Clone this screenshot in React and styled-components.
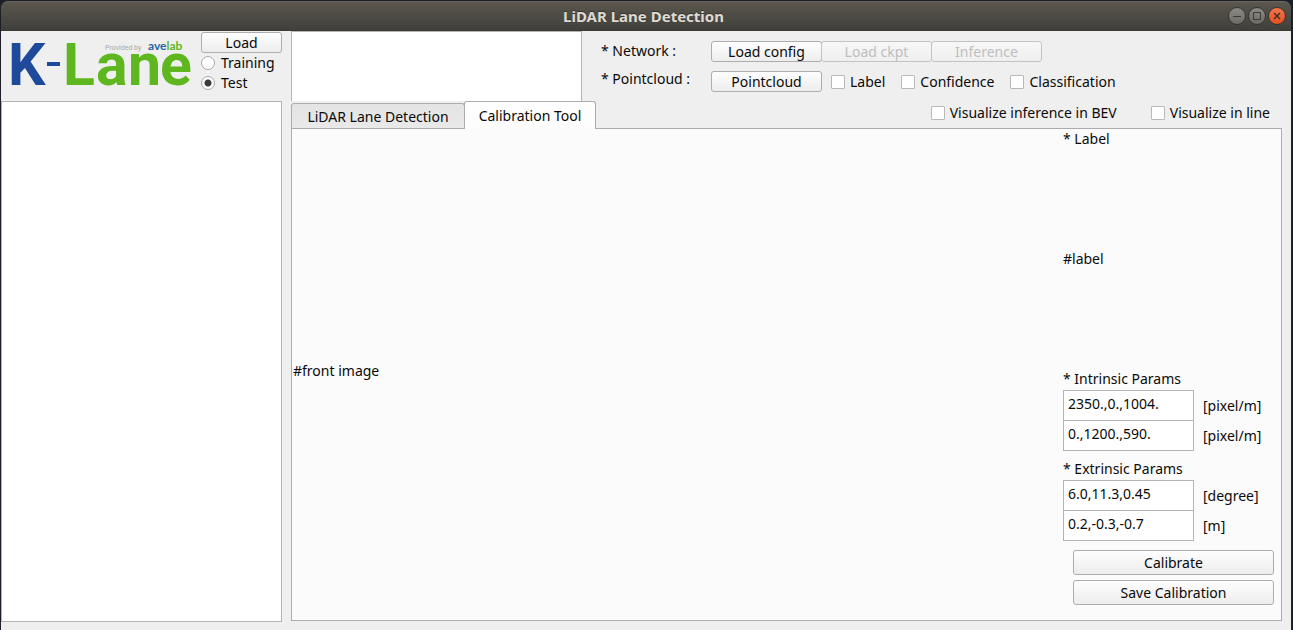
import React, { useState } from "react";
import styled, { createGlobalStyle } from "styled-components";

const GlobalStyle = createGlobalStyle`
  * { box-sizing: border-box; }
  body {
    margin: 0;
    background: #1c1f28;
    color: #0a0a0a;
    font-family: "Noto Sans", "Open Sans", sans-serif;
    font-size: 14px;
    line-height: 20px;
  }
  button, input, textarea { font: inherit; color: inherit; }
`;

const Window = styled.div`
  display: flex;
  flex-direction: column;
  min-height: 100vh;
  border: 1px solid #1c1f28;
  border-right-width: 2px;
  border-bottom: 0;
`;

const TitleBar = styled.header`
  display: grid;
  grid-template-columns: 1fr auto 1fr;
  align-items: center;
  height: 30px;
  padding-right: 5px;
  border-top: 1px solid #6b675e;
  border-bottom: 1px solid #3a3934;
  border-radius: 7px 7px 0 0;
  background: linear-gradient(#5b574e, #403f3a);
`;

const Title = styled.h1`
  grid-column: 2;
  margin: 0;
  font-size: 15px;
  line-height: 20px;
  font-weight: 700;
  color: #dfdbd2;
  text-shadow: 0 -1px 0 #33322e;
`;

const WindowButtons = styled.div`
  display: flex;
  justify-content: flex-end;
  gap: 2px;
`;

const RoundButton = styled.button`
  display: block;
  width: 18px;
  height: 18px;
  padding: 0;
  border: 1px solid #34332f;
  border-radius: 50%;
  background: ${(p) =>
    p.$close ? "linear-gradient(#f5764c, #e4501f)" : "linear-gradient(#8c8a84, #6c6a64)"};
  svg { display: block; }
`;

const Body = styled.main`
  flex: 1;
  display: grid;
  grid-template-columns: 281px 1fr;
  gap: 9px;
  padding: 0 9px 8px 0;
  background: #efefef;
`;

const Column = styled.section`
  display: flex;
  flex-direction: column;
  min-width: 0;
`;

const Brand = styled.div`
  display: flex;
  height: 70px;
`;

const Logo = styled.svg`
  display: block;
  width: 200px;
  height: 70px;
  flex: none;
`;

const Mode = styled.form`
  display: flex;
  flex-direction: column;
  width: 81px;
  padding-top: 1px;
`;

const Button = styled.button`
  height: ${(p) => (p.$tall ? 25 : 21)}px;
  width: ${(p) => (p.$w ? `${p.$w}px` : "auto")};
  padding: 0;
  line-height: 18px;
  border: 1px solid #adadad;
  border-radius: 3px;
  background: linear-gradient(#fefefe, #ededed);
  &:disabled {
    color: #bebebe;
    border-color: #c3c3c3;
    background: linear-gradient(#f7f7f7, #efefef);
  }
`;

const Choice = styled.label`
  display: flex;
  align-items: center;
  gap: ${(p) => (p.$radio ? 6 : 5)}px;
  height: 20px;
  white-space: nowrap;
`;

const Radio = styled.input`
  appearance: none;
  width: 14px;
  height: 14px;
  margin: 0;
  border: 1px solid #a8a8a8;
  border-radius: 50%;
  background: #fff;
  &:checked { background: radial-gradient(circle, #3c3c3c 3px, #fff 4px); }
`;

const Check = styled.input`
  appearance: none;
  width: 14px;
  height: 14px;
  margin: 0;
  border: 1px solid #b9b9b9;
  border-radius: 1px;
  background: #fff;
  &:checked { background: #3c3c3c; box-shadow: inset 0 0 0 3px #fff; }
`;

const FileList = styled.div`
  flex: 1;
  border: 1px solid #b4b4b4;
  background: #fff;
`;

const Top = styled.div`
  display: flex;
  height: 70px;
`;

const Log = styled.textarea`
  display: block;
  width: 291px;
  flex: none;
  resize: none;
  border: 1px solid #b4b4b4;
  border-bottom: 0;
  background: #fff;
  outline: 0;
`;

const Controls = styled.div`
  display: flex;
  padding: 10px 0 0 19px;
`;

const RowNames = styled.div`
  display: flex;
  flex-direction: column;
  gap: 8px;
  width: 110px;
`;

const ControlRows = styled.div`
  display: flex;
  flex-direction: column;
  gap: 9px;
`;

const ControlRow = styled.div`
  display: flex;
  align-items: center;
  height: 21px;
`;

const Joined = styled.div`
  display: flex;
  button + button { margin-left: -1px; }
`;

const Checks = styled.div`
  display: flex;
  gap: ${(p) => (p.$end ? 34 : 16)}px;
  margin-left: ${(p) => (p.$end ? "auto" : "9px")};
  padding: ${(p) => (p.$end ? "0 12px 6px 0" : "1px 0 0")};
`;

const TabRow = styled.div`
  display: flex;
  align-items: flex-end;
  height: 28px;
`;

const Tab = styled.button`
  position: relative;
  width: ${(p) => p.$w}px;
  height: ${(p) => (p.$active ? 28 : 26)}px;
  margin-left: ${(p) => (p.$active ? "-1px" : 0)};
  padding: 0;
  white-space: nowrap;
  border: 1px solid #adadad;
  border-bottom: 0;
  border-radius: 3px 3px 0 0;
  background: ${(p) => (p.$active ? "linear-gradient(#fff, #fcfcfc)" : "linear-gradient(#e4e4e4, #e9e9e9)")};
  z-index: ${(p) => (p.$active ? 1 : 0)};
  box-shadow: ${(p) => (p.$active ? "none" : "inset 0 -1px #adadad")};
`;

const Panel = styled.div`
  flex: 1;
  display: flex;
  margin-top: -1px;
  margin-bottom: 1px;
  border: 1px solid #adadad;
  background: #fbfbfb;
`;

const FrontImage = styled.div`
  flex: 1;
  display: flex;
  align-items: center;
  padding: 0 1px 8px;
`;

const Side = styled.form`
  display: flex;
  flex-direction: column;
  width: 218px;
  padding-right: 7px;
`;

const SideText = styled.div`
  height: 21px;
  margin-bottom: 99px;
`;

const Params = styled.fieldset`
  min-width: 0;
  margin: 0 0 8px;
  padding: 0;
  border: 0;
`;

const Legend = styled.legend`
  height: 21px;
  padding: 0;
`;

const Param = styled.label`
  display: flex;
  align-items: center;
  gap: 9px;
  height: 31px;
  & + & { margin-top: -1px; }
`;

const Field = styled.input`
  width: 131px;
  height: 31px;
  padding: 0 4px 4px;
  border: 1px solid #b4b4b4;
  border-radius: 0;
  background: #fff;
`;

const Actions = styled.div`
  display: flex;
  flex-direction: column;
  gap: 5px;
  padding: 1px 0 0 10px;
`;

function CheckItem({ children }) {
  return (
    <Choice>
      <Check type="checkbox" />
      {children}
    </Choice>
  );
}

function ParamGroup({ title, rows }) {
  return (
    <Params>
      <Legend>{title}</Legend>
      {rows.map(([value, unit]) => (
        <Param key={value}>
          <Field type="text" defaultValue={value} />
          {unit}
        </Param>
      ))}
    </Params>
  );
}

function KLaneLogo() {
  return (
    <Logo viewBox="0 0 200 70" role="img" aria-label="K-Lane, provided by avelab">
      <g fontFamily="Roboto, sans-serif" fontWeight="700" fontSize="59">
        <text x="7" y="54" fill="#1f4a9c">K</text>
        <rect x="46" y="31" width="13" height="4" fill="#1f4a9c" />
        <text x="62 95 127 159" y="54" fill="#5fb71f">Lane</text>
      </g>
      <text x="104" y="19" fontFamily="Roboto, sans-serif" fontSize="7" fill="#a9a9a9">Provided by</text>
      <text x="147" y="19" fontFamily="Lato, sans-serif" fontWeight="700" fontSize="12" fill="#1f67a8">
        ave<tspan fill="#5fb71f">lab</tspan>
      </text>
    </Logo>
  );
}

export default function App() {
  const [mode, setMode] = useState("Test");
  const [tab, setTab] = useState("Calibration Tool");

  return (
    <>
      <GlobalStyle />
      <Window>
        <TitleBar>
          <Title>LiDAR Lane Detection</Title>
          <WindowButtons>
            <RoundButton aria-label="Minimize">
              <svg width="16" height="16" fill="none" stroke="#3a3935"><path d="M4 8.5h8" /></svg>
            </RoundButton>
            <RoundButton aria-label="Maximize">
              <svg width="16" height="16" fill="none" stroke="#3a3935"><path d="M4.500 4.500h7v7h-7z" /></svg>
            </RoundButton>
            <RoundButton $close aria-label="Close">
              <svg width="16" height="16" fill="none" stroke="#3a2a22" strokeWidth="1.300"><path d="M5 5l6 6M11 5l-6 6" /></svg>
            </RoundButton>
          </WindowButtons>
        </TitleBar>

        <Body>
          <Column>
            <Brand>
              <KLaneLogo />
              <Mode>
                <Button type="button">Load</Button>
                {["Training", "Test"].map((name) => (
                  <Choice key={name} $radio>
                    <Radio type="radio" name="mode" checked={mode === name} onChange={() => setMode(name)} />
                    {name}
                  </Choice>
                ))}
              </Mode>
            </Brand>
            <FileList />
          </Column>

          <Column>
            <Top>
              <Log aria-label="Log" />
              <Controls>
                <RowNames>
                  <span>* Network :</span>
                  <span>* Pointcloud :</span>
                </RowNames>
                <ControlRows>
                  <ControlRow>
                    <Joined>
                      <Button $w={111}>Load config</Button>
                      <Button $w={111} disabled>Load ckpt</Button>
                      <Button $w={111} disabled>Inference</Button>
                    </Joined>
                  </ControlRow>
                  <ControlRow>
                    <Button $w={111}>Pointcloud</Button>
                    <Checks>
                      <CheckItem>Label</CheckItem>
                      <CheckItem>Confidence</CheckItem>
                      <CheckItem>Classification</CheckItem>
                    </Checks>
                  </ControlRow>
                </ControlRows>
              </Controls>
            </Top>

            <TabRow>
              <Tab $w={174} $active={tab === "LiDAR Lane Detection"} onClick={() => setTab("LiDAR Lane Detection")}>
                LiDAR Lane Detection
              </Tab>
              <Tab $w={132} $active={tab === "Calibration Tool"} onClick={() => setTab("Calibration Tool")}>
                Calibration Tool
              </Tab>
              <Checks $end>
                <CheckItem>Visualize inference in BEV</CheckItem>
                <CheckItem>Visualize in line</CheckItem>
              </Checks>
            </TabRow>

            <Panel>
              <FrontImage>#front image</FrontImage>
              <Side>
                <SideText>* Label</SideText>
                <SideText>#label</SideText>
                <ParamGroup
                  title="* Intrinsic Params"
                  rows={[["2350.,0.,1004.", "[pixel/m]"], ["0.,1200.,590.", "[pixel/m]"]]}
                />
                <ParamGroup
                  title="* Extrinsic Params"
                  rows={[["6.0,11.3,0.45", "[degree]"], ["0.2,-0.3,-0.7", "[m]"]]}
                />
                <Actions>
                  <Button type="button" $tall>Calibrate</Button>
                  <Button type="button" $tall>Save Calibration</Button>
                </Actions>
              </Side>
            </Panel>
          </Column>
        </Body>
      </Window>
    </>
  );
}
